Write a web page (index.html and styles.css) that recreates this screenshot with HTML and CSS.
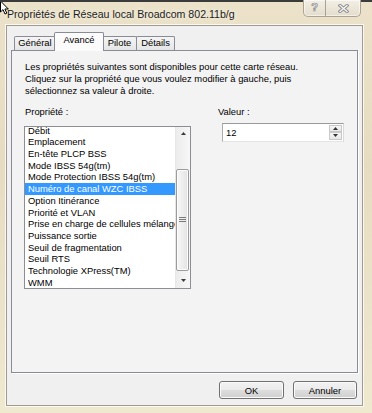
FILE: index.html
```html
<!DOCTYPE html>
<html lang="fr">
<head>
<meta charset="utf-8">
<title>Propriétés de Réseau local Broadcom 802.11b/g</title>
<link rel="stylesheet" href="styles.css">
</head>
<body>
<div class="window">
  <svg class="cursor" width="10" height="14" viewBox="0 0 10 14"><path d="M0.5 -1 L0.5 10 L3 7.6 L5 12 L6.8 11.2 L4.9 7 L8.3 7 Z" fill="#fff" stroke="#000" stroke-width="1"/></svg>
  <div class="titlebar">
    <div class="title">Propriétés de Réseau local Broadcom 802.11b/g</div>
    <div class="caption">
      <div class="cap-btn help">?</div>
      <div class="cap-btn close"><svg width="11" height="9" viewBox="0 0 11 9"><path d="M2 1.5 L9 7.5 M9 1.5 L2 7.5" stroke="#8e8e8e" stroke-width="3.2" stroke-linecap="square" fill="none"/><path d="M2 1.5 L9 7.5 M9 1.5 L2 7.5" stroke="#f6f6f6" stroke-width="1.3" stroke-linecap="square" fill="none"/></svg></div>
    </div>
  </div>
  <div class="client">
    <div class="tabs">
      <div class="tab t1">Général</div>
      <div class="tab sel">Avancé</div>
      <div class="tab t3">Pilote</div>
      <div class="tab t4">Détails</div>
    </div>
    <div class="panel">
      <p class="intro">Les propriétés suivantes sont disponibles pour cette carte réseau.<br>Cliquez sur la propriété que vous voulez modifier à gauche, puis<br>sélectionnez sa valeur à droite.</p>
      <div class="fields">
        <div class="col-prop">
          <div class="label">Propriété :</div>
          <div class="listbox">
            <div class="items">
              <div class="item">Débit</div>
              <div class="item">Emplacement</div>
              <div class="item">En-tête PLCP BSS</div>
              <div class="item">Mode IBSS 54g(tm)</div>
              <div class="item">Mode Protection IBSS 54g(tm)</div>
              <div class="item selected">Numéro de canal WZC IBSS</div>
              <div class="item">Option Itinérance</div>
              <div class="item">Priorité et VLAN</div>
              <div class="item">Prise en charge de cellules mélangées</div>
              <div class="item">Puissance sortie</div>
              <div class="item">Seuil de fragmentation</div>
              <div class="item">Seuil RTS</div>
              <div class="item">Technologie XPress(TM)</div>
              <div class="item">WMM</div>
            </div>
            <div class="vscroll">
              <div class="sb-btn up"><svg width="5" height="3" viewBox="0 0 5 3"><path d="M0 3 L2.5 0 L5 3 Z" fill="#3a3a3a"/></svg></div>
              <div class="sb-track">
                <div class="sb-thumb"><svg width="7" height="5" viewBox="0 0 7 5"><path d="M0 0.5 H7 M0 2.5 H7 M0 4.5 H7" stroke="#7a7a7a" stroke-width="1"/></svg></div>
              </div>
              <div class="sb-btn down"><svg width="5" height="3" viewBox="0 0 5 3"><path d="M0 0 L2.5 3 L5 0 Z" fill="#3a3a3a"/></svg></div>
            </div>
          </div>
        </div>
        <div class="col-val">
          <div class="label">Valeur :</div>
          <div class="spin">
            <span class="spin-text">12</span>
            <div class="spin-btns">
              <div class="spin-btn"><svg width="5" height="3" viewBox="0 0 5 3"><path d="M0 3 L2.5 0 L5 3 Z" fill="#333"/></svg></div>
              <div class="spin-btn"><svg width="5" height="3" viewBox="0 0 5 3"><path d="M0 0 L2.5 3 L5 0 Z" fill="#333"/></svg></div>
            </div>
          </div>
        </div>
      </div>
    </div>
    <div class="buttons">
      <button class="btn ok">OK</button>
      <button class="btn cancel">Annuler</button>
    </div>
  </div>
</div>
</body>
</html>
```
FILE: styles.css
```css
* { box-sizing: border-box; }
html, body { margin: 0; padding: 0; }
body {
  width: 372px;
  height: 413px;
  overflow: hidden;
  background: #6d6a63;
  font-family: "Liberation Sans", Arial, sans-serif;
  color: #000;
}
.window {
  position: relative;
  width: 372px;
  height: 413px;
  border-top: 2px solid #3b3b3b;
  background: linear-gradient(180deg, #ebe2c9 0, #e6dcc2 40%, #efe9cf 100%);
  display: flex;
  flex-direction: column;
}
.cursor { position: absolute; left: 0; top: 0; }
.titlebar {
  height: 23px;
  flex-shrink: 0;
  display: flex;
  align-items: flex-start;
}
.title {
  padding: 6px 0 0 7px;
  font-size: 10.6px;
  line-height: 12px;
  color: #1c1c1c;
  white-space: nowrap;
  text-shadow: 0 0 5px rgba(255,255,255,0.9);
}
.caption {
  margin-left: auto;
  margin-right: 11px;
  margin-top: -2px;
  height: 17px;
  display: flex;
  border: 1px solid #aaa395;
  border-top: none;
  border-radius: 0 0 5px 5px;
  background: linear-gradient(#f3efe5, #e4ddcc);
  box-shadow: inset 0 0 0 1px rgba(255,255,255,0.55);
}
.cap-btn.help {
  width: 22px;
  border-right: 1px solid #aaa395;
  text-align: center;
  font-size: 11px;
  font-weight: bold;
  line-height: 14px;
  color: #f6f6f6;
  -webkit-text-stroke: 0.7px #8a8a8a;
}
.cap-btn.close {
  width: 34px;
  display: flex;
  align-items: center;
  justify-content: center;
}
.client {
  flex: 1;
  margin: 0 9px 7px 6px;
  background: #f0f0f0;
  border: 1px solid #9f9b92;
  box-shadow: 0 0 0 1px rgba(255,255,255,0.75);
  padding: 6px 4px 0 4px;
  display: flex;
  flex-direction: column;
}
.tabs {
  height: 18px;
  flex-shrink: 0;
  display: flex;
  align-items: flex-end;
  padding-left: 3px;
  position: relative;
  z-index: 1;
}
.tab {
  height: 14px;
  border: 1px solid #898c95;
  border-bottom: none;
  border-radius: 2px 2px 0 0;
  background: linear-gradient(#f5f5f5, #e5e5e5);
  font-size: 9.4px;
  line-height: 12px;
  text-align: center;
  white-space: nowrap;
}
.t1 { width: 42px; }
.sel {
  width: 50px;
  height: 19px;
  margin: 0 -2px -1px;
  background: #fbfbfb;
  line-height: 14px;
  position: relative;
  z-index: 2;
}
.t3 { width: 35px; }
.t4 { width: 39px; margin-left: -1px; }
.panel {
  height: 323px;
  flex-shrink: 0;
  border: 1px solid #898c95;
  background: #f3f3f3;
  box-shadow: 1px 1px 0 #fff;
  padding: 9.5px 12px 0 13px;
}
.intro {
  margin: 0;
  font-size: 9.4px;
  line-height: 12.4px;
  white-space: nowrap;
}
.fields {
  display: flex;
  margin-top: 8px;
}
.label {
  font-size: 9.4px;
  line-height: 12px;
  height: 12px;
  white-space: nowrap;
}
.col-prop { width: 167px; margin-left: -1px; }
.col-prop .label { padding-left: 1px; }
.listbox {
  margin-top: 8px;
  height: 163px;
  border: 1px solid #8c8e92;
  background: #fff;
  display: flex;
  overflow: hidden;
}
.items { flex: 1; overflow: hidden; }
.item {
  height: 11.7px;
  line-height: 11.7px;
  font-size: 9.4px;
  padding-left: 3px;
  white-space: nowrap;
  overflow: hidden;
}
.item:first-child { margin-top: -2px; }
.item.selected { background: #3399ff; color: #fff; }
.vscroll {
  width: 15px;
  display: flex;
  flex-direction: column;
  background: linear-gradient(90deg, #ececec, #f7f7f7);
  border-left: 1px solid #e6e6e6;
}
.sb-btn {
  display: flex;
  align-items: center;
  justify-content: center;
}
.sb-btn.up { height: 13px; }
.sb-btn.down { height: 14px; }
.sb-track { flex: 1; padding-top: 29px; }
.sb-thumb {
  height: 102px;
  margin: 0 1px 0 0;
  border: 1px solid #9b9b9b;
  border-radius: 2px;
  background: linear-gradient(90deg, #f7f7f7, #e3e3e3);
  box-shadow: inset 0 0 0 1px #fcfcfc;
  display: flex;
  align-items: center;
  justify-content: center;
}
.col-val { margin-left: 27px; }
.spin {
  margin-top: 5px;
  margin-left: 4px;
  width: 122px;
  height: 19px;
  border: 1px solid;
  border-color: #9a9a9a #d9d9d9 #e4e4e4 #acacac;
  background: #fff;
  display: flex;
}
.spin-text {
  flex: 1;
  padding-left: 3px;
  font-size: 9.4px;
  line-height: 17px;
}
.spin-btns {
  width: 13px;
  margin: 1px 1px 1px 0;
  display: flex;
  flex-direction: column;
}
.spin-btn {
  flex: 1;
  border: 1px solid #c9c9c9;
  background: linear-gradient(#f7f7f7, #e6e6e6);
  display: flex;
  align-items: center;
  justify-content: center;
}
.buttons {
  display: flex;
  justify-content: flex-end;
  gap: 9px;
  margin-top: 8px;
  padding-right: 1px;
}
.btn {
  height: 18px;
  padding: 0;
  font-family: "Liberation Sans", Arial, sans-serif;
  font-size: 9.4px;
  color: #000;
  border: 1px solid #707070;
  border-radius: 3px;
  background: linear-gradient(#f2f2f2 0%, #ebebeb 50%, #dddddd 51%, #cfcfcf 100%);
  box-shadow: inset 0 0 0 1px #fbfbfb;
}
.btn.ok { width: 65px; }
.btn.cancel { width: 64px; }
```
